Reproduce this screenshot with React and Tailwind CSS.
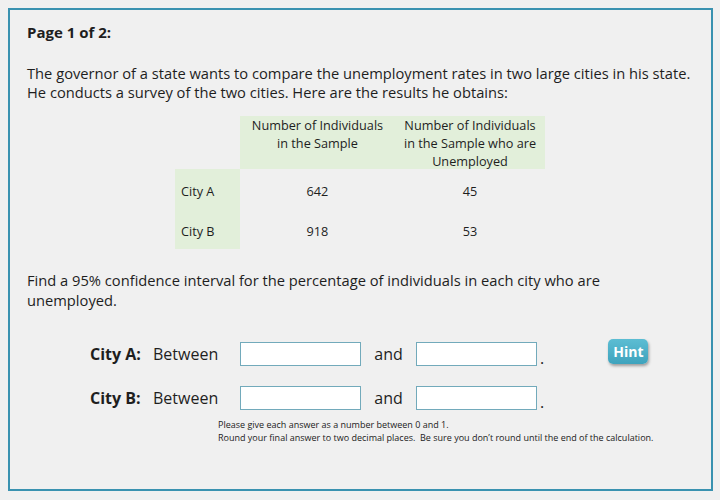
import React from 'react'

function AnswerRow({ label, hint }) {
  return (
    <div className="flex items-center h-[24px]">
      <span className="w-[63px] font-bold text-[16px]">{label}</span>
      <span className="w-[87px] text-[16px]">Between</span>
      <input className="w-[121px] h-[24px] bg-white border border-[#72aabb] outline-none" />
      <span className="w-[55px] text-center text-[16px]">and</span>
      <input className="w-[121px] h-[24px] bg-white border border-[#72aabb] outline-none" />
      <span className="text-[16px] ml-[3px] self-end leading-none">.</span>
      {hint && (
        <button className="ml-[64px] -mt-[6px] px-[5px] h-[25px] rounded-[5px] bg-gradient-to-b from-[#5cbdd3] to-[#3ea3bd] text-white font-bold text-[14px] shadow-[1px_2px_3px_rgba(0,0,0,0.35)]">
          Hint
        </button>
      )}
    </div>
  )
}

export default function App() {
  return (
    <div className="w-[720px] h-[500px] bg-[#f0f0f0] p-[8px] text-[#1e1e1e]" style={{ fontFamily: '"Open Sans", sans-serif' }}>
      <div className="w-[705px] h-[483px] border-2 border-[#3a92b0] pl-[17px] pt-[11px]">
        <h1 className="font-bold text-[15px] leading-[22px]">Page 1 of 2:</h1>

        <p className="mt-[21px] text-[14.7px] leading-[19px]">
          The governor of a state wants to compare the unemployment rates in two large cities in his state.
          <br />
          He conducts a survey of the two cities. Here are the results he obtains:
        </p>

        <div className="ml-[148px] mt-[14px] text-[12.7px] leading-[18px]">
          <div className="flex">
            <div className="w-[65px]" />
            <div className="w-[305px] flex bg-[#e2efda] h-[53px]">
              <div className="w-[155px] text-center">Number of Individuals<br />in the Sample</div>
              <div className="w-[150px] text-center">Number of Individuals<br />in the Sample who are<br />Unemployed</div>
            </div>
          </div>
          <div className="flex">
            <div className="w-[65px] bg-[#e2efda] h-[80px] flex flex-col">
              <div className="h-[43px] flex items-center pl-[6px]">City A</div>
              <div className="h-[37px] flex items-center pl-[6px]">City B</div>
            </div>
            <div className="flex flex-col">
              <div className="h-[43px] flex items-center">
                <span className="w-[155px] text-center">642</span>
                <span className="w-[150px] text-center">45</span>
              </div>
              <div className="h-[37px] flex items-center">
                <span className="w-[155px] text-center">918</span>
                <span className="w-[150px] text-center">53</span>
              </div>
            </div>
          </div>
        </div>

        <p className="mt-[21px] text-[14.7px] leading-[20px] w-[600px]">
          Find a 95% confidence interval for the percentage of individuals in each city who are unemployed.
        </p>

        <div className="ml-[63px] mt-[32px] flex flex-col gap-[20px]">
          <AnswerRow label="City A:" hint />
          <AnswerRow label="City B:" />
        </div>

        <div className="ml-[191px] mt-[8px] text-[9px] leading-[13px] text-[#222]">
          Please give each answer as a number between 0 and 1.
          <br />
          Round your final answer to two decimal places.&nbsp; Be sure you don’t round until the end of the calculation.
        </div>
      </div>
    </div>
  )
}
